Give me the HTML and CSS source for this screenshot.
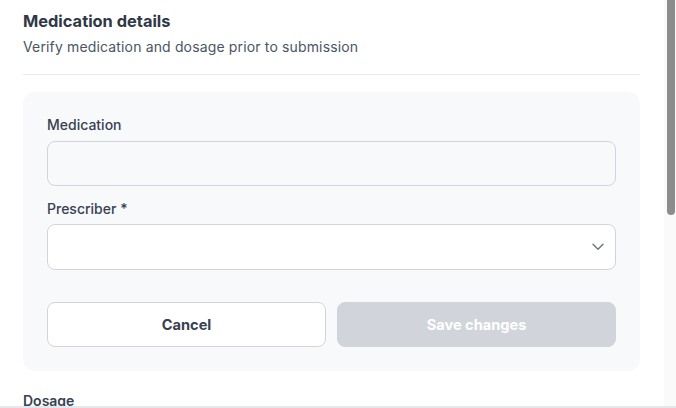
FILE: index.html
```html
<!DOCTYPE html>
<html lang="en">
<head>
<meta charset="utf-8">
<title>Medication details</title>
<link rel="stylesheet" href="styles.css">
</head>
<body>
<div class="frame">
  <div class="viewport">
    <div class="page">
      <header class="head">
        <h1 class="title">Medication details</h1>
        <p class="subtitle">Verify medication and dosage prior to submission</p>
      </header>
      <div class="divider"></div>
      <section class="card">
        <label class="label">Medication</label>
        <div class="input input-muted"></div>
        <label class="label label-gap">Prescriber <span class="req">*</span></label>
        <div class="input select">
          <svg class="chev" width="12" height="8" viewBox="0 0 12 8" fill="none"><path d="M1 1.2l5 5 5-5" stroke="#6b7280" stroke-width="1.4" stroke-linecap="round" stroke-linejoin="round"/></svg>
        </div>
        <div class="actions">
          <button class="btn btn-cancel">Cancel</button>
          <button class="btn btn-save">Save changes</button>
        </div>
      </section>
      <section class="more">
        <label class="label label-strong">Dosage</label>
        <div class="input"></div>
      </section>
    </div>
  </div>
  <div class="scrollbar"><div class="thumb"></div></div>
</div>
</body>
</html>
```

FILE: styles.css
```css
html, body {
  margin: 0;
  padding: 0;
  background: #ffffff;
  font-family: Inter, "Noto Sans", sans-serif;
  color: #374151;
}
.frame {
  height: 406px;
  display: flex;
  border-bottom: 2px solid #e6e7ea;
  overflow: hidden;
}
.viewport {
  flex: 1;
  overflow: hidden;
}
.scrollbar {
  width: 12px;
  background: #fafafa;
  display: flex;
  flex-direction: column;
}
.thumb {
  height: 215px;
  margin-left: 3px;
  margin-right: 1px;
  background: #8c8c8c;
  border-radius: 0 0 5px 5px;
}
.page {
  padding: 11px 24px 40px 23px;
}
.head {
  display: flex;
  flex-direction: column;
}
.title {
  margin: 0;
  font-size: 16.4px;
  line-height: 20px;
  font-weight: 700;
  color: #2f3846;
}
.subtitle {
  margin: 6px 0 0;
  font-size: 14px;
  line-height: 20px;
  letter-spacing: 0.15px;
  color: #4b5563;
}
.divider {
  height: 1px;
  background: #e5e7eb;
  margin-top: 17px;
}
.card {
  margin-top: 17px;
  background: #f8f9fb;
  border-radius: 12px;
  padding: 24px 24px 24px;
  display: flex;
  flex-direction: column;
}
.label {
  display: block;
  font-size: 14px;
  line-height: 18px;
  font-weight: 500;
  color: #374151;
  margin-bottom: 7px;
}
.label-gap {
  margin-top: 14px;
  margin-bottom: 6px;
}
.req {
  color: #374151;
}
.input {
  height: 43px;
  border: 1px solid #d1d5db;
  border-radius: 8px;
  background: #ffffff;
}
.input-muted {
  background: #f8f9fb;
}
.select {
  height: 44px;
  display: flex;
  align-items: center;
  justify-content: flex-end;
  padding-right: 11px;
}
.chev {
  display: block;
}
.actions {
  margin-top: 32px;
  display: grid;
  grid-template-columns: 1fr 1fr;
  gap: 11px;
}
.btn {
  height: 45px;
  border-radius: 8px;
  font-family: Inter, "Noto Sans", sans-serif;
  font-size: 14.6px;
  font-weight: 700;
  cursor: pointer;
}
.btn-cancel {
  background: #ffffff;
  border: 1px solid #d1d5db;
  color: #374151;
}
.btn-save {
  background: #d1d5db;
  border: 1px solid #d1d5db;
  color: #ffffff;
}
.more {
  margin-top: 21px;
  display: flex;
  flex-direction: column;
}
.label-strong {
  font-weight: 600;
}
```
